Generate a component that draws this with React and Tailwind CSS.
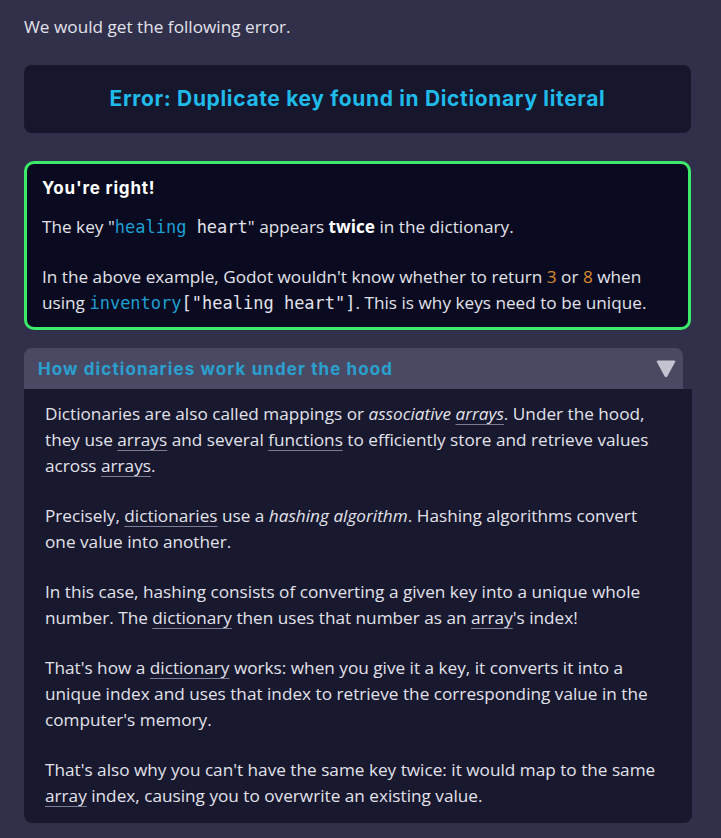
import React from "react";

// ---------------------------------------------------------------------------
// Small pieces
// ---------------------------------------------------------------------------
function Term({ children }) {
  return (
    <span className="underline decoration-[#7c7c95] decoration-1 underline-offset-[4px]">
      {children}
    </span>
  );
}

function Code({ children }) {
  return (
    <span className="font-['DejaVu_Sans_Mono',monospace] text-[17px]">
      {children}
    </span>
  );
}

function TriangleDown() {
  return (
    <svg width="22" height="20" viewBox="0 0 22 20" aria-hidden="true">
      <path
        d="M3 1.5 H19 Q21 1.5 20 3.3 L12.4 17.3 Q11 19.3 9.6 17.3 L2 3.3 Q1 1.5 3 1.5 Z"
        fill="#c2c4cf"
      />
    </svg>
  );
}

// ---------------------------------------------------------------------------
// Page
// ---------------------------------------------------------------------------
export default function App() {
  return (
    <div className="min-h-screen bg-[#31304a] pl-6 pr-[30px] pt-[14px] pb-4 font-['Open_Sans',sans-serif] text-[17.2px] leading-[26px] text-[#e2e2ea]">
      <p>We would get the following error.</p>

      {/* ---- Error banner ---- */}
      <div className="mt-[25px] h-[68px] rounded-lg bg-[#16162c] flex items-center justify-center">
        <h3 className="font-['Inter',sans-serif] font-bold text-[21px] tracking-[0.65px] text-[#1fbbea]">
          Error: Duplicate key found in Dictionary literal
        </h3>
      </div>

      {/* ---- Correct answer ---- */}
      <div className="mt-[28px] rounded-[10px] border-[3px] border-[#3ceb69] bg-[#0a0b20] px-[15px] pt-3 pb-[11px]">
        <h4 className="font-['Inter',sans-serif] font-bold text-[17px] tracking-[0.8px] leading-6 text-white">
          You're right!
        </h4>
        <p className="mt-[14px]">
          The key "<Code><span className="text-[#1f9fd2]">healing</span> heart</Code>" appears{" "}
          <b className="font-bold text-white">twice</b> in the dictionary.
        </p>
        <p className="mt-6">
          In the above example, Godot wouldn't know whether to return{" "}
          <span className="text-[#d98b2f]">3</span> or{" "}
          <span className="text-[#d98b2f]">8</span> when using{" "}
          <Code>
            <span className="text-[#1f9fd2]">inventory</span>["healing heart"]
          </Code>
          . This is why keys need to be unique.
        </p>
      </div>

      {/* ---- Details ---- */}
      <div className="mt-[18px] -mr-px">
        <div className="mr-[9px] h-[41px] rounded-t-lg bg-[#4a4964] pl-[14px] pr-[6px] flex items-center justify-between">
          <span className="font-['Inter',sans-serif] font-bold text-[17px] tracking-[1.1px] text-[#2aa0cf]">
            How dictionaries work under the hood
          </span>
          <TriangleDown />
        </div>
        <div className="rounded-b-lg bg-[#18182f] pl-[21px] pr-6 pt-3 pb-[14px] space-y-6">
          <p>
            Dictionaries are also called mappings or{" "}
            <i>associative <Term>arrays</Term></i>. Under the hood, they use{" "}
            <Term>arrays</Term> and several <Term>functions</Term> to
            efficiently store and retrieve values across <Term>arrays</Term>.
          </p>
          <p>
            Precisely, <Term>dictionaries</Term> use a <i>hashing algorithm</i>.
            Hashing algorithms convert one value into another.
          </p>
          <p>
            In this case, hashing consists of converting a given key into a
            unique whole number. The <Term>dictionary</Term> then uses that
            number as an <Term>array</Term>'s index!
          </p>
          <p>
            That's how a <Term>dictionary</Term> works: when you give it a key,
            it converts it into a unique index and uses that index to retrieve
            the corresponding value in the computer's memory.
          </p>
          <p>
            That's also why you can't have the same key twice: it would map to
            the same <Term>array</Term> index, causing you to overwrite an
            existing value.
          </p>
        </div>
      </div>
    </div>
  );
}
